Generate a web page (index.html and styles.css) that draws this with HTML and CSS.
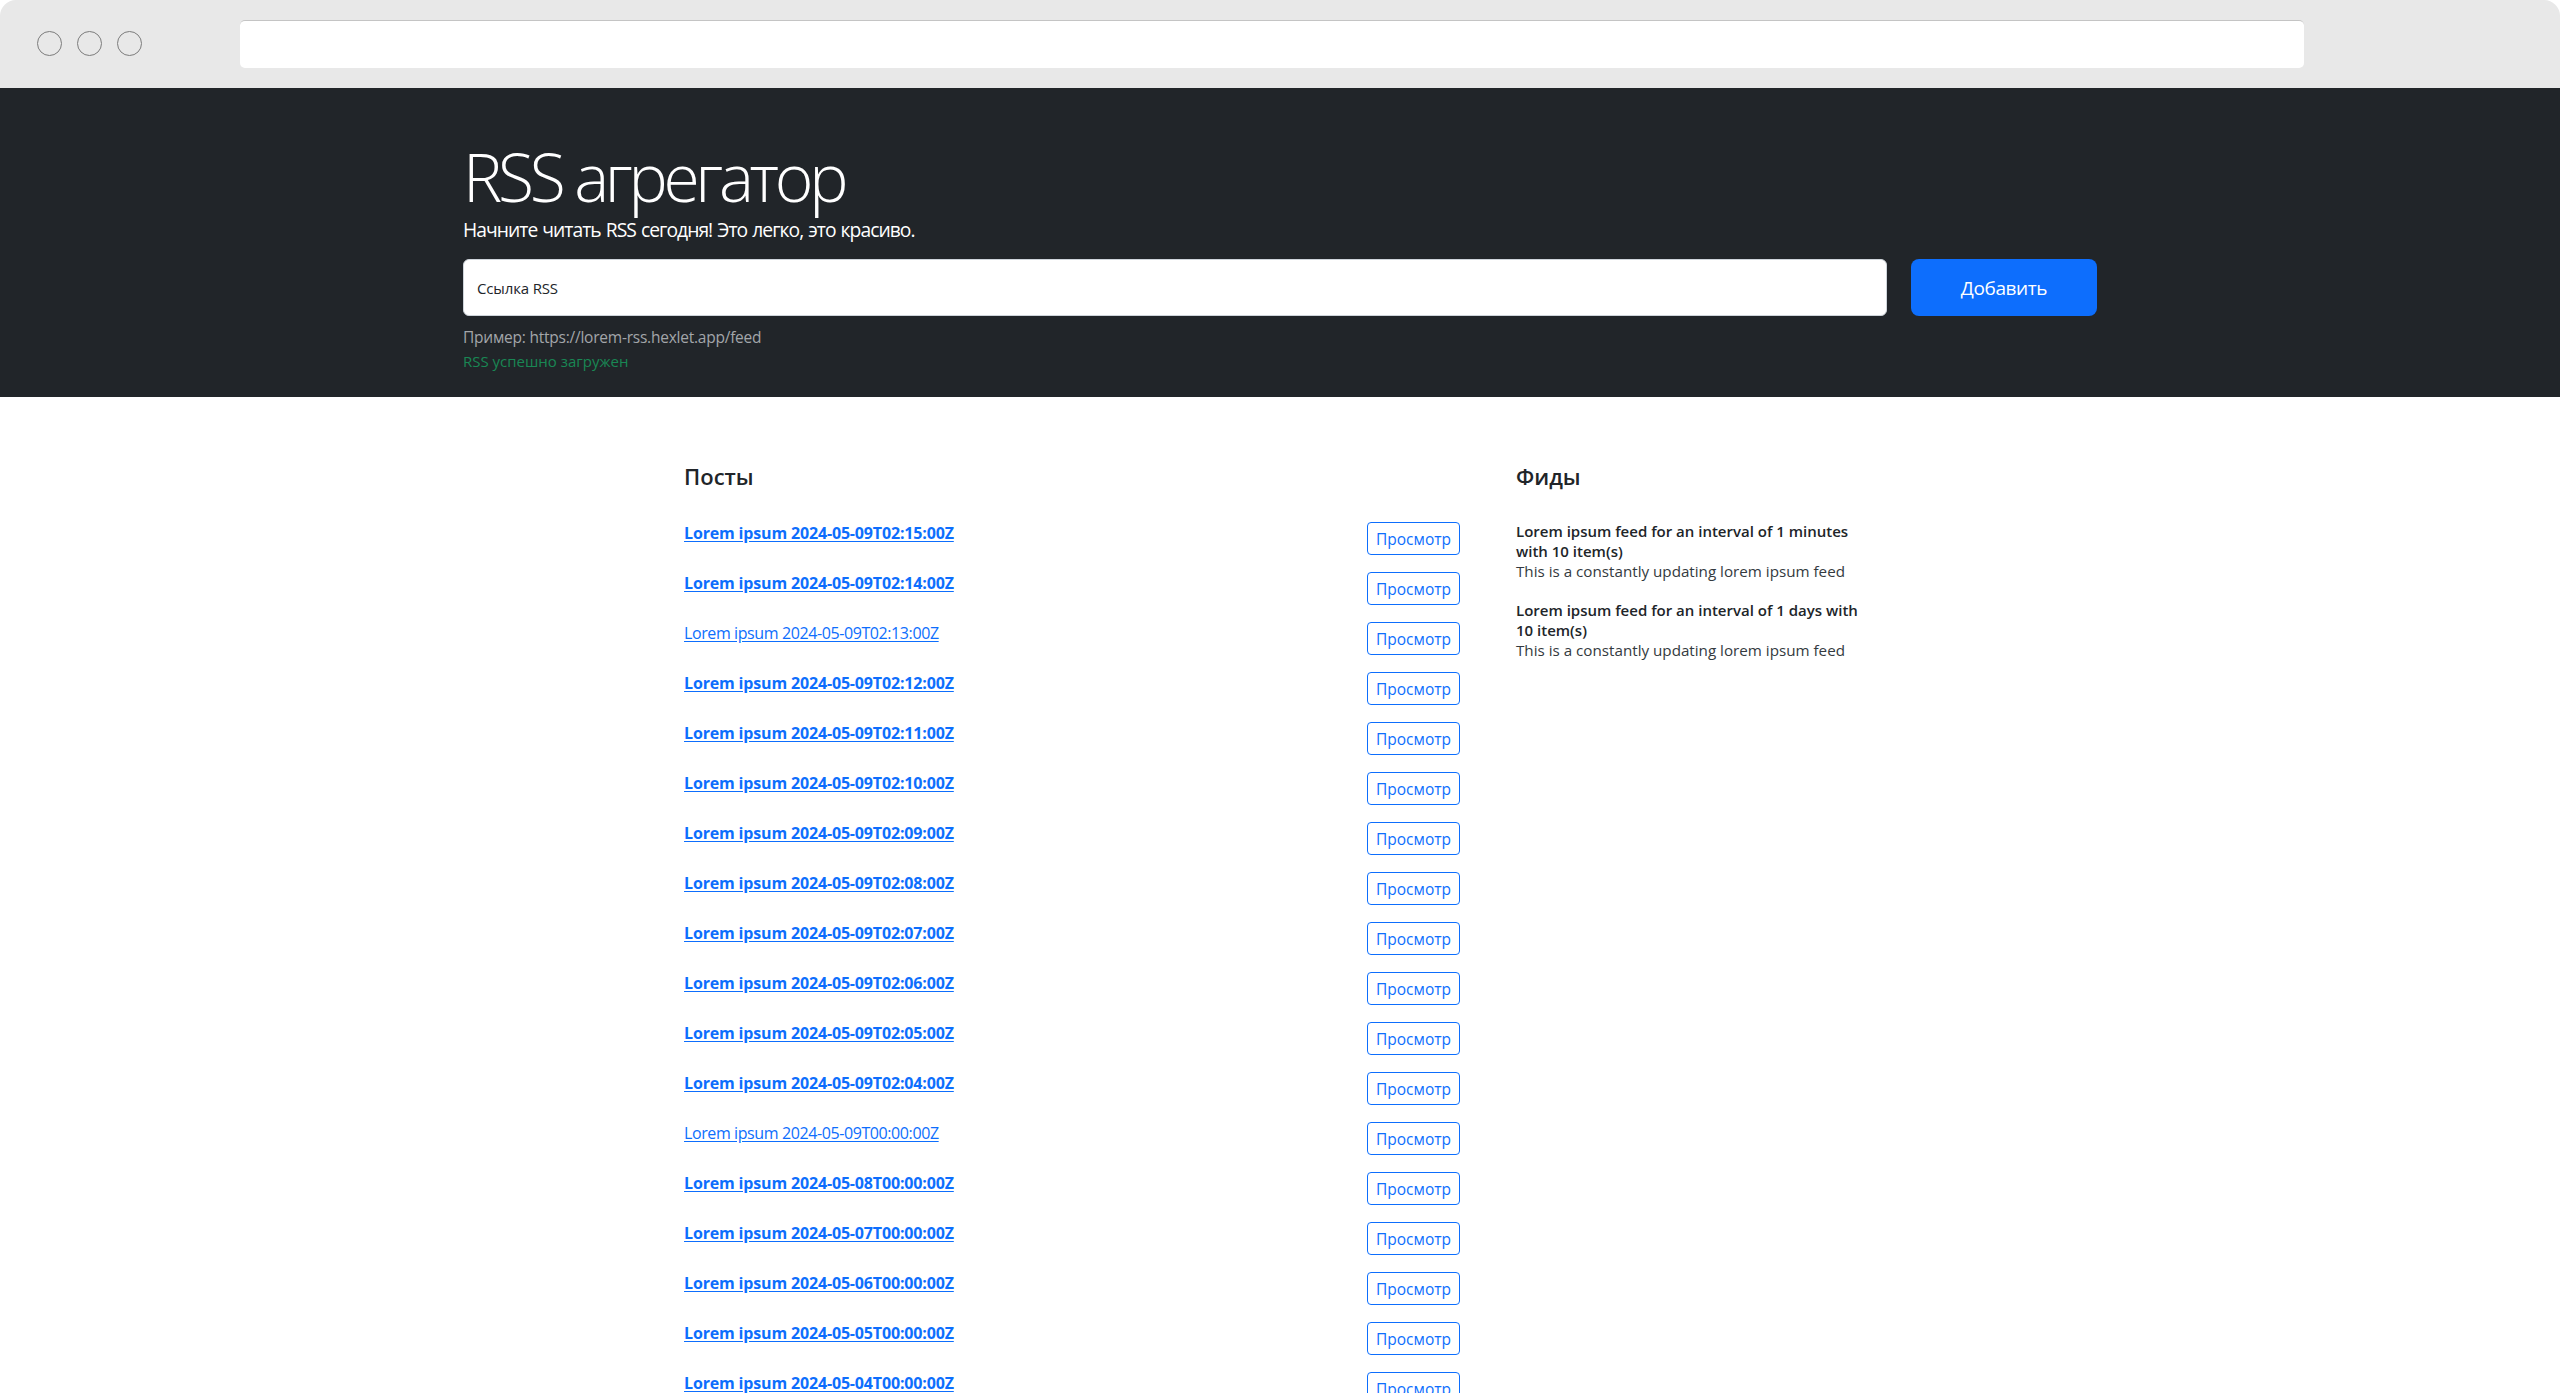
FILE: index.html
```html
<!DOCTYPE html>
<html lang="ru">
<head>
<meta charset="utf-8">
<title>RSS агрегатор</title>
<link rel="stylesheet" href="styles.css">
</head>
<body>
<div class="page">
  <div class="chrome">
    <div class="dots"><span class="dot"></span><span class="dot"></span><span class="dot"></span></div>
    <div class="urlbar"></div>
  </div>
  <section class="hero">
    <div class="hero-inner">
      <h1 class="title">RSS агрегатор</h1>
      <p class="lead">Начните читать RSS сегодня! Это легко, это красиво.</p>
      <form class="rss-form">
        <div class="url-input"><span class="url-label">Ссылка RSS</span></div>
        <button type="button" class="add-btn">Добавить</button>
      </form>
      <p class="example">Пример: https://lorem-rss.hexlet.app/feed</p>
      <p class="feedback">RSS успешно загружен</p>
    </div>
  </section>
  <section class="content">
    <div class="posts">
      <h2 class="heading">Посты</h2>
      <ul class="post-list">
        <li class="post"><a href="#" class="post-link bold">Lorem ipsum 2024-05-09T02:15:00Z</a><button type="button" class="view-btn">Просмотр</button></li>
        <li class="post"><a href="#" class="post-link bold">Lorem ipsum 2024-05-09T02:14:00Z</a><button type="button" class="view-btn">Просмотр</button></li>
        <li class="post"><a href="#" class="post-link">Lorem ipsum 2024-05-09T02:13:00Z</a><button type="button" class="view-btn">Просмотр</button></li>
        <li class="post"><a href="#" class="post-link bold">Lorem ipsum 2024-05-09T02:12:00Z</a><button type="button" class="view-btn">Просмотр</button></li>
        <li class="post"><a href="#" class="post-link bold">Lorem ipsum 2024-05-09T02:11:00Z</a><button type="button" class="view-btn">Просмотр</button></li>
        <li class="post"><a href="#" class="post-link bold">Lorem ipsum 2024-05-09T02:10:00Z</a><button type="button" class="view-btn">Просмотр</button></li>
        <li class="post"><a href="#" class="post-link bold">Lorem ipsum 2024-05-09T02:09:00Z</a><button type="button" class="view-btn">Просмотр</button></li>
        <li class="post"><a href="#" class="post-link bold">Lorem ipsum 2024-05-09T02:08:00Z</a><button type="button" class="view-btn">Просмотр</button></li>
        <li class="post"><a href="#" class="post-link bold">Lorem ipsum 2024-05-09T02:07:00Z</a><button type="button" class="view-btn">Просмотр</button></li>
        <li class="post"><a href="#" class="post-link bold">Lorem ipsum 2024-05-09T02:06:00Z</a><button type="button" class="view-btn">Просмотр</button></li>
        <li class="post"><a href="#" class="post-link bold">Lorem ipsum 2024-05-09T02:05:00Z</a><button type="button" class="view-btn">Просмотр</button></li>
        <li class="post"><a href="#" class="post-link bold">Lorem ipsum 2024-05-09T02:04:00Z</a><button type="button" class="view-btn">Просмотр</button></li>
        <li class="post"><a href="#" class="post-link">Lorem ipsum 2024-05-09T00:00:00Z</a><button type="button" class="view-btn">Просмотр</button></li>
        <li class="post"><a href="#" class="post-link bold">Lorem ipsum 2024-05-08T00:00:00Z</a><button type="button" class="view-btn">Просмотр</button></li>
        <li class="post"><a href="#" class="post-link bold">Lorem ipsum 2024-05-07T00:00:00Z</a><button type="button" class="view-btn">Просмотр</button></li>
        <li class="post"><a href="#" class="post-link bold">Lorem ipsum 2024-05-06T00:00:00Z</a><button type="button" class="view-btn">Просмотр</button></li>
        <li class="post"><a href="#" class="post-link bold">Lorem ipsum 2024-05-05T00:00:00Z</a><button type="button" class="view-btn">Просмотр</button></li>
        <li class="post"><a href="#" class="post-link bold">Lorem ipsum 2024-05-04T00:00:00Z</a><button type="button" class="view-btn">Просмотр</button></li>
      </ul>
    </div>
    <div class="feeds">
      <h2 class="heading">Фиды</h2>
      <ul class="feed-list">
        <li class="feed">
          <h3 class="feed-title">Lorem ipsum feed for an interval of 1 minutes with 10 item(s)</h3>
          <p class="feed-desc">This is a constantly updating lorem ipsum feed</p>
        </li>
        <li class="feed">
          <h3 class="feed-title">Lorem ipsum feed for an interval of 1 days with 10 item(s)</h3>
          <p class="feed-desc">This is a constantly updating lorem ipsum feed</p>
        </li>
      </ul>
    </div>
  </section>
</div>
</body>
</html>
```
FILE: styles.css
```css
* { box-sizing: border-box; }

html, body {
  margin: 0;
  padding: 0;
  background: #ffffff;
}

body {
  font-family: "Open Sans", "Noto Sans", sans-serif;
  color: #212529;
}

.page {
  height: 100vh;
  overflow: hidden;
}

/* browser chrome */
.chrome {
  height: 88px;
  background: #e8e8e8;
  border-radius: 16px 16px 0 0;
  display: flex;
  align-items: center;
  padding: 0 256px 0 37px;
}

.dots {
  display: flex;
  gap: 15px;
  margin-top: -2px;
}

.dot {
  width: 25px;
  height: 25px;
  border-radius: 50%;
  border: 1.5px solid #7c7c7c;
}

.urlbar {
  flex: 1;
  height: 48px;
  margin-left: 98px;
  background: #ffffff;
  border-radius: 5px;
  border-top: 1px solid #c4c4c4;
}

/* hero */
.hero {
  background: #212529;
  height: 309px;
  padding-top: 49px;
}

.hero-inner {
  width: 1634px;
  margin: 0 auto;
}

.title {
  margin: 0;
  font-size: 66px;
  line-height: 78px;
  font-weight: 300;
  letter-spacing: -0.065em;
  color: #ffffff;
}

.lead {
  margin: 0 0 15px;
  font-size: 19.3px;
  line-height: 29px;
  font-weight: 400;
  letter-spacing: -0.05em;
  word-spacing: 1px;
  color: #ffffff;
}

.rss-form {
  display: flex;
  gap: 24px;
  margin: 0;
}

.url-input {
  flex: 1;
  height: 57px;
  background: #ffffff;
  border: 1px solid #ced4da;
  border-radius: 6px;
  display: flex;
  align-items: center;
  padding-left: 13px;
}

.url-label {
  font-size: 15px;
  color: #212529;
  letter-spacing: -0.01em;
}

.add-btn {
  width: 186px;
  height: 57px;
  border: none;
  border-radius: 8px;
  background: #0d6efd;
  color: #ffffff;
  font-family: inherit;
  font-size: 19px;
  letter-spacing: -0.02em;
  padding: 0;
}

.example {
  margin: 9px 0 0;
  font-size: 15.5px;
  line-height: 24px;
  letter-spacing: -0.015em;
  color: #a3a6a9;
}

.feedback {
  margin: 2px 0 0;
  font-size: 15px;
  line-height: 21px;
  color: #198754;
}

/* content */
.content {
  width: 1224px;
  margin: 0 auto;
  padding-top: 65px;
  display: grid;
  grid-template-columns: 808px 392px;
  gap: 24px;
  align-items: start;
}

.heading {
  margin: 0 0 22px;
  padding-left: 16px;
  font-size: 22px;
  line-height: 29px;
  font-weight: 600;
  color: #212529;
}

.post-list,
.feed-list {
  list-style: none;
  margin: 0;
  padding: 0;
}

.post {
  display: flex;
  justify-content: space-between;
  align-items: flex-start;
  padding: 8px 16px;
  height: 50px;
}

.post-link {
  font-size: 16px;
  line-height: 24px;
  color: #0d6efd;
  text-decoration: underline;
  text-underline-offset: 2px;
  letter-spacing: -0.025em;
}

.post-link.bold {
  font-weight: 700;
  letter-spacing: -0.01em;
}

.view-btn {
  margin-top: 1px;
  height: 33px;
  padding: 0 8px;
  border: 1px solid #0d6efd;
  border-radius: 4px;
  background: #ffffff;
  color: #0d6efd;
  font-family: inherit;
  font-size: 15.5px;
  letter-spacing: 0;
}

.feed {
  padding: 8px 16px 10px;
}

.feed-title {
  margin: 0;
  font-size: 15px;
  line-height: 20px;
  font-weight: 600;
  color: #212529;
}

.feed-desc {
  margin: 0;
  font-size: 15.2px;
  line-height: 21px;
  color: #343a40;
}
```
